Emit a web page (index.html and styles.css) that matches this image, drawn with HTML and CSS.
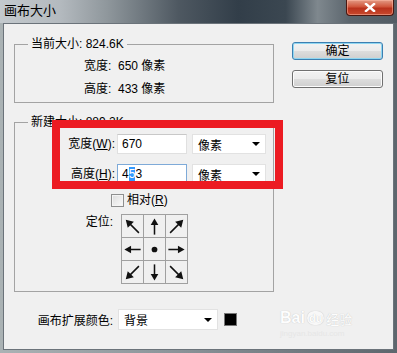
FILE: index.html
```html
<!DOCTYPE html>
<html lang="zh-CN">
<head>
    <meta charset="UTF-8">
    <meta name="viewport" content="width=device-width, initial-scale=1.0">
    <title>画布大小</title>
    <link rel="stylesheet" href="styles.css">
</head>
<body>
    <div class="window">
        <div class="titlebar">
            <span class="title">画布大小</span>
            <span class="close">
                <svg width="12" height="9" viewBox="0 0 12 9">
                    <path d="M2 1 L10 8 M10 1 L2 8" stroke="#fff" stroke-width="2.4" stroke-linecap="square"/>
                </svg>
            </span>
        </div>
        <div class="client">
            <div class="main">
                <fieldset class="group group-current">
                    <legend>当前大小: 824.6K</legend>
                    <div class="info-row first">宽度: &nbsp;650 像素</div>
                    <div class="info-row">高度: &nbsp;433 像素</div>
                </fieldset>

                <fieldset class="group group-new">
                    <legend>新建大小: 889.2K</legend>
                    <div class="size-grid">
                        <label class="field-label">宽度(<u>W</u>):</label>
                        <div class="input">670</div>
                        <div class="select">像素<i class="caret"></i></div>

                        <label class="field-label">高度(<u>H</u>):</label>
                        <div class="input focus">4<span class="sel">5</span>3</div>
                        <div class="select">像素<i class="caret"></i></div>
                    </div>

                    <div class="check-row">
                        <span class="checkbox"></span>
                        <span>相对(<u>R</u>)</span>
                    </div>

                    <div class="anchor-row">
                        <span class="anchor-label">定位:</span>
                        <div class="anchor-grid">
                            <span class="cell"><svg viewBox="0 0 22 23"><g transform="rotate(-45 11 11.5)"><path d="M11 1.5 L6.5 9 L15.5 9 Z"/><line x1="11" y1="8" x2="11" y2="21"/></g></svg></span>
                            <span class="cell"><svg viewBox="0 0 22 23"><g><path d="M11 3 L7 10 L15 10 Z"/><line x1="11" y1="9" x2="11" y2="20"/></g></svg></span>
                            <span class="cell"><svg viewBox="0 0 22 23"><g transform="rotate(45 11 11.5)"><path d="M11 1.5 L6.5 9 L15.5 9 Z"/><line x1="11" y1="8" x2="11" y2="21"/></g></svg></span>
                            <span class="cell"><svg viewBox="0 0 22 23"><g transform="rotate(-90 11 11.5)"><path d="M11 3 L7 10 L15 10 Z"/><line x1="11" y1="9" x2="11" y2="20"/></g></svg></span>
                            <span class="cell"><svg viewBox="0 0 22 23"><circle cx="11" cy="11.5" r="3"/></svg></span>
                            <span class="cell"><svg viewBox="0 0 22 23"><g transform="rotate(90 11 11.5)"><path d="M11 3 L7 10 L15 10 Z"/><line x1="11" y1="9" x2="11" y2="20"/></g></svg></span>
                            <span class="cell"><svg viewBox="0 0 22 23"><g transform="rotate(-135 11 11.5)"><path d="M11 1.5 L6.5 9 L15.5 9 Z"/><line x1="11" y1="8" x2="11" y2="21"/></g></svg></span>
                            <span class="cell"><svg viewBox="0 0 22 23"><g transform="rotate(180 11 11.5)"><path d="M11 3 L7 10 L15 10 Z"/><line x1="11" y1="9" x2="11" y2="20"/></g></svg></span>
                            <span class="cell"><svg viewBox="0 0 22 23"><g transform="rotate(135 11 11.5)"><path d="M11 1.5 L6.5 9 L15.5 9 Z"/><line x1="11" y1="8" x2="11" y2="21"/></g></svg></span>
                        </div>
                    </div>
                </fieldset>

                <div class="ext-row">
                    <span class="ext-label">画布扩展颜色:</span>
                    <div class="select wide">背景<i class="caret"></i></div>
                    <span class="swatch"></span>
                </div>
            </div>

            <div class="side">
                <button class="btn default">确定</button>
                <button class="btn">复位</button>
            </div>
        </div>

        <!-- red annotation box -->
        <div class="mark"></div>

        <div class="watermark">
            <div class="wm-logo">
                <span class="wm-bai">Bai</span><span class="wm-paw">du</span><span class="wm-cn">经验</span>
            </div>
            <div class="wm-url">jingyan.baidu.com</div>
        </div>
    </div>
</body>
</html>
```

FILE: styles.css
```css
body {
    margin: 0;
    font-family: "Liberation Sans", "Noto Sans CJK SC", sans-serif;
    font-size: 12px;
    color: #000;
    background: #fff;
}
.window {
    width: 397px;
    height: 353px;
    position: relative;
    overflow: hidden;
    display: flex;
    flex-direction: column;
    background: linear-gradient(90deg, #aab2b4 0%, #8e979c 40%, #5d666d 100%);
}
.titlebar {
    height: 23px;
    flex: none;
    display: flex;
    justify-content: space-between;
    align-items: flex-start;
    background: linear-gradient(90deg, #c3c9cd 0%, #b4babf 15%, #8f979c 27%, #4e5861 45%, #323e49 60%, #3b4751 72%, #7f888e 80%, #5b656d 88%, #525c64 100%);
}
.title {
    padding-left: 4px;
    line-height: 21px;
    font-size: 13px;
}
.close {
    width: 46px;
    height: 15px;
    margin-right: 3px;
    border: 1px solid #4a1710;
    border-top: none;
    border-radius: 0 0 4px 4px;
    box-shadow: inset 0 0 0 1px rgba(255, 190, 170, 0.5);
    background: linear-gradient(#e39a84 0%, #d0553b 45%, #b9321c 55%, #c8492e 100%);
    display: flex;
    align-items: center;
    justify-content: center;
}
.client {
    flex: 1;
    margin: 0 3px 3px 3px;
    border: 1px solid #6b737a;
    background: #f0f0f0;
    display: flex;
}
.main {
    width: 260px;
    padding: 13px 0 0 10px;
}
.group {
    margin: 0;
    padding: 0;
    min-width: 0;
    border: 1px solid #a3a3a3;
}
.group legend {
    margin-left: 13px;
    padding: 0 3px;
    line-height: 14px;
}
.group-current {
    padding-bottom: 1px;
}
.info-row {
    padding-left: 69px;
    line-height: 23px;
}
.info-row.first {
    margin-top: 4px;
}
.group-new {
    margin-top: 12px;
    padding-bottom: 7px;
}
.size-grid {
    margin-top: 5px;
    display: grid;
    grid-template-columns: 100px 73px 74px;
    grid-auto-rows: 20px;
    column-gap: 2px;
    row-gap: 10px;
}
.field-label {
    text-align: right;
    line-height: 20px;
}
.input {
    width: 70px;
    box-sizing: border-box;
    border: 1px solid #e0e0e0;
    border-top-color: #c8c8c8;
    background: #fff;
    padding-left: 4px;
    line-height: 18px;
}
.input.focus {
    border-color: #7eaad8;
}
.sel {
    background: #3399ff;
    color: #fff;
}
.select {
    box-sizing: border-box;
    border: 1px solid #e2e2e2;
    background: #fff;
    padding: 0 5px;
    display: flex;
    align-items: center;
    justify-content: space-between;
}
.caret {
    width: 0;
    height: 0;
    border-left: 4px solid transparent;
    border-right: 4px solid transparent;
    border-top: 4px solid #000;
}
.check-row {
    margin-top: 10px;
    padding-left: 96px;
    display: flex;
    align-items: center;
    gap: 3px;
    line-height: 13px;
}
.checkbox {
    width: 13px;
    height: 13px;
    box-sizing: border-box;
    border: 1px solid #8e8f8f;
    background: linear-gradient(135deg, #dcdcdc, #fbfbfb);
    box-shadow: inset 0 0 0 1px #f4f4f4;
}
.anchor-row {
    margin-top: 7px;
    display: flex;
    gap: 8px;
}
.anchor-label {
    width: 98px;
    text-align: right;
    line-height: 16px;
}
.anchor-grid {
    display: grid;
    grid-template-columns: repeat(3, 22px);
    grid-template-rows: repeat(3, 23px);
    border-left: 1px solid #a0a0a0;
    border-top: 1px solid #a0a0a0;
}
.cell {
    box-sizing: border-box;
    border-right: 1px solid #a0a0a0;
    border-bottom: 1px solid #a0a0a0;
    display: flex;
}
.cell svg {
    width: 22px;
    height: 23px;
    fill: #111;
    stroke: #111;
    stroke-width: 1.6;
}
.cell svg path {
    stroke: none;
}
.cell svg circle {
    stroke: none;
}
.ext-row {
    margin-top: 17px;
    display: flex;
    align-items: center;
}
.ext-label {
    width: 99px;
    text-align: right;
}
.select.wide {
    width: 100px;
    height: 21px;
    margin-left: 5px;
}
.swatch {
    width: 13px;
    height: 13px;
    margin-left: 6px;
    box-sizing: border-box;
    border: 1px solid #777;
    background: #000;
}
.side {
    margin-left: 18px;
    padding-top: 18px;
    display: flex;
    flex-direction: column;
    gap: 10px;
}
.btn {
    width: 91px;
    height: 18px;
    padding: 0;
    font: inherit;
    line-height: 16px;
    border: 1px solid #707070;
    border-radius: 3px;
    background: linear-gradient(#f2f2f2 0%, #ebebeb 50%, #dddddd 51%, #cfcfcf 100%);
    box-shadow: inset 0 0 0 1px #fcfcfc;
}
.btn.default {
    border-color: #3c7fb1;
    box-shadow: inset 0 0 0 1px #8fd6f1;
}
.mark {
    position: absolute;
    left: 52px;
    top: 120px;
    width: 231px;
    height: 69px;
    box-sizing: border-box;
    border: 8px solid #ec1b22;
}
.watermark {
    position: absolute;
    left: 280px;
    top: 307px;
    width: 92px;
    color: #fdfdfd;
    text-shadow: 0 0 1px #b8b8b8;
    white-space: nowrap;
}
.wm-logo {
    display: flex;
    align-items: center;
    height: 22px;
}
.wm-bai {
    font-size: 16px;
    font-weight: bold;
}
.wm-paw {
    font-size: 11px;
    font-weight: bold;
    line-height: 14px;
    padding: 0 2px;
    margin: 0 2px;
    border-radius: 7px;
    background: #f8f8f8;
    box-shadow: 0 0 1px #b8b8b8;
}
.wm-cn {
    font-size: 13px;
}
.wm-url {
    font-size: 8px;
    line-height: 10px;
    color: #e6e6e6;
    text-shadow: none;
}
```
